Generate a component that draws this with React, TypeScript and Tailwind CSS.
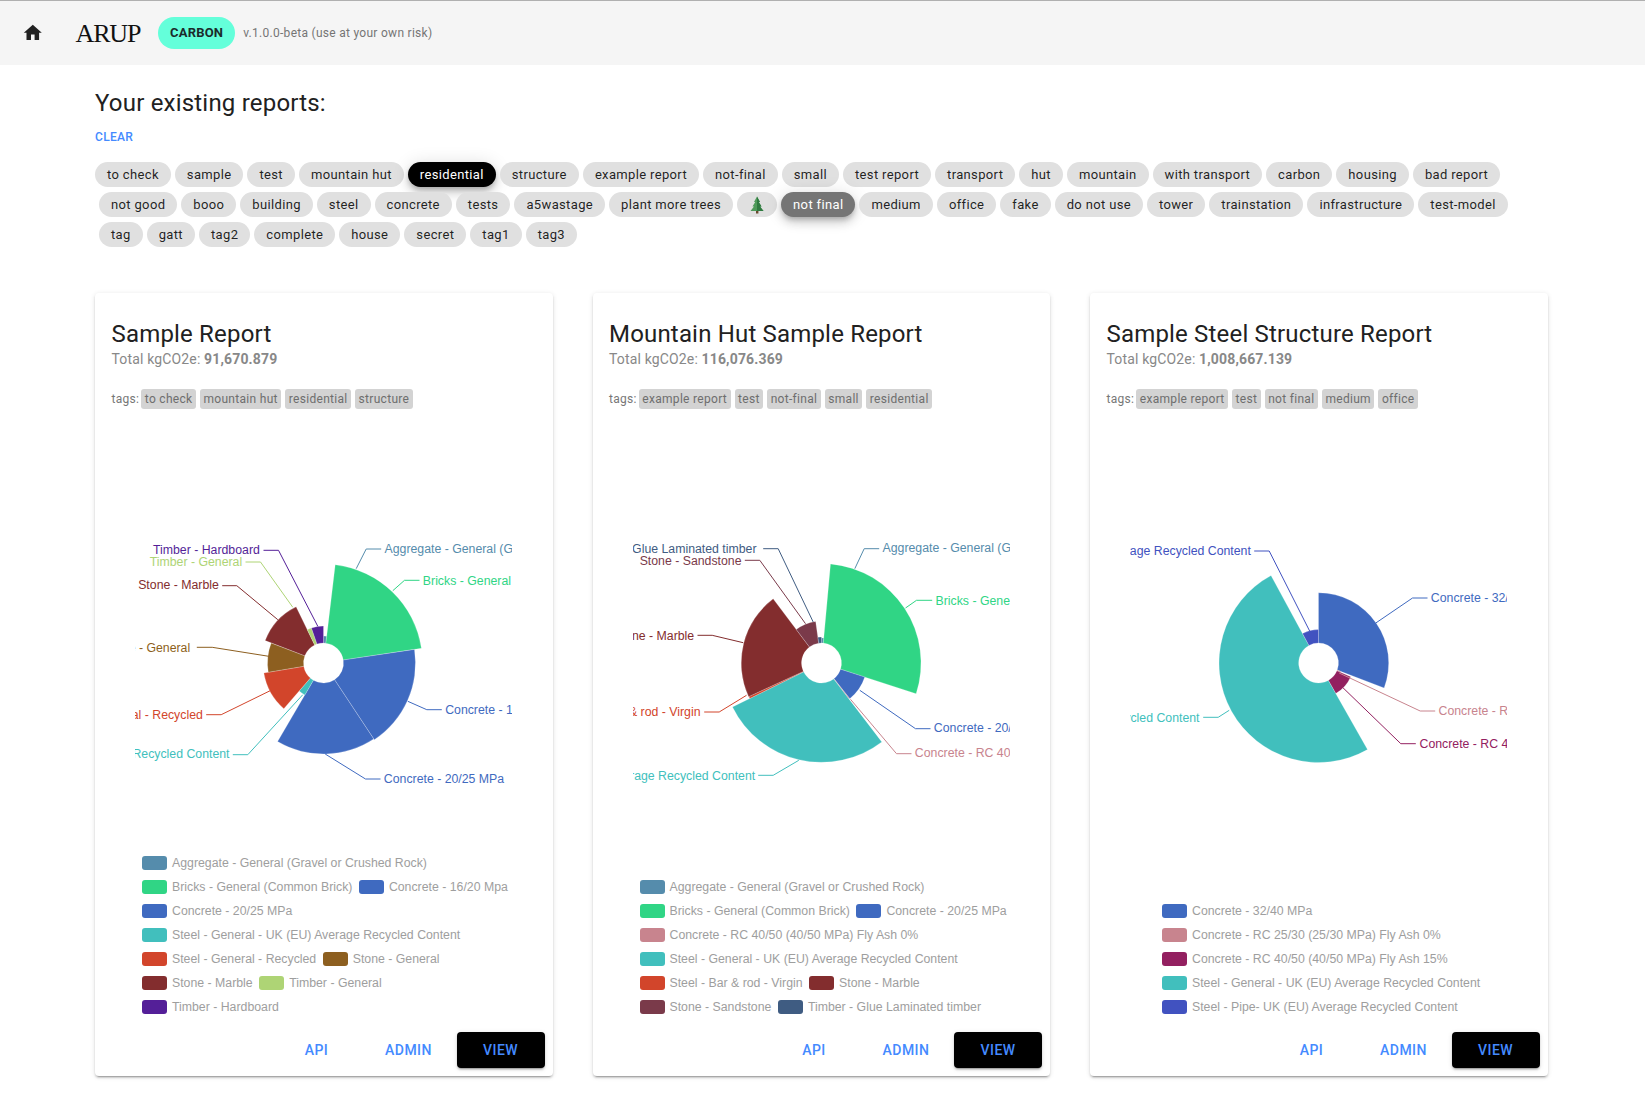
import React from "react";

const C = {
  agg: "#558CAC", bri: "#30D585", con: "#3F6AC0", ste: "#41BFBD", rec: "#D2452B", sto: "#8D5F20",
  mar: "#832D2E", tim: "#AED475", har: "#541F98", pink: "#C8848E", san: "#7A3A4A", glue: "#3F5C82",
  rc15: "#932060", pipe: "#4152C0",
};

type Wedge = [number, number, number, string];
type Label = { c: string; t: string; pts: number[]; x: number; y: number; end?: boolean };
type Report = {
  title: string; total: string; tags: string[]; center: [number, number];
  wedges: Wedge[]; labels: Label[]; legend: [string, string][][]; legendPad: string;
};

const reports: Report[] = [
  {
    title: "Sample Report", total: "91,670.879", tags: ["to check", "mountain hut", "residential", "structure"],
    center: [612, 425],
    wedges: [
      [0, 6.8, 27, C.agg], [6.8, 81.5, 99, C.bri], [81.5, 146.5, 92, C.con], [146.5, 210.3, 91, C.con],
      [210.3, 221, 37, C.ste], [221, 260.5, 60.5, C.rec], [260.5, 291, 56, C.sto], [291, 334, 62.5, C.mar],
      [334, 341, 37, C.tim], [341, 360, 37, C.har],
    ],
    labels: [
      { c: C.agg, t: "Aggregate - General (Gravel or Crushed Rock)", pts: [710, 142, 740, 83, 785, 83], x: 795, y: 83 },
      { c: C.bri, t: "Bricks - General (Common Brick)", pts: [820, 208, 855, 177, 900, 177], x: 910, y: 177 },
      { c: C.con, t: "Concrete - 16/20 Mpa", pts: [865, 540, 922, 565, 967, 565], x: 977, y: 565 },
      { c: C.con, t: "Concrete - 20/25 MPa", pts: [617, 698, 738, 773, 783, 773], x: 793, y: 773 },
      { c: C.ste, t: "Steel - General - UK (EU) Average Recycled Content", pts: [550, 520, 385, 700, 340, 700], x: 330, y: 698, end: true },
      { c: C.rec, t: "Steel - General - Recycled", pts: [452, 508, 305, 580, 260, 580], x: 250, y: 580, end: true },
      { c: C.sto, t: "Stone - General", pts: [448, 405, 278, 378, 232, 378], x: 212, y: 378, end: true },
      { c: C.mar, t: "Stone - Marble", pts: [475, 295, 352, 193, 308, 193], x: 298, y: 191, end: true },
      { c: C.tim, t: "Timber - General", pts: [520, 258, 423, 122, 378, 122], x: 368, y: 122, end: true },
      { c: C.har, t: "Timber - Hardboard", pts: [595, 315, 477, 87, 432, 87], x: 421, y: 86, end: true },
    ],
    legendPad: "pl-[47px]",
    legend: [
      [[C.agg, "Aggregate - General (Gravel or Crushed Rock)"]],
      [[C.bri, "Bricks - General (Common Brick)"], [C.con, "Concrete - 16/20 Mpa"]],
      [[C.con, "Concrete - 20/25 MPa"]],
      [[C.ste, "Steel - General - UK (EU) Average Recycled Content"]],
      [[C.rec, "Steel - General - Recycled"], [C.sto, "Stone - General"]],
      [[C.mar, "Stone - Marble"], [C.tim, "Timber - General"]],
      [[C.har, "Timber - Hardboard"]],
    ],
  },
  {
    title: "Mountain Hut Sample Report", total: "116,076.369", tags: ["example report", "test", "not-final", "small", "residential"],
    center: [665, 428],
    wedges: [
      [0, 5.2, 25, C.agg], [5.2, 108, 99.5, C.bri], [108, 141.6, 45.5, C.con], [141.6, 142.6, 45, C.pink],
      [142.6, 243.7, 99.3, C.ste], [243.7, 245.2, 80, C.rec], [245.2, 323, 80.3, C.mar], [323, 352, 42, C.san],
      [352, 360, 26, C.glue],
    ],
    labels: [
      { c: C.agg, t: "Aggregate - General (Gravel or Crushed Rock)", pts: [765, 145, 793, 85, 838, 85], x: 848, y: 83 },
      { c: C.bri, t: "Bricks - General (Common Brick)", pts: [917, 263, 950, 240, 997, 240], x: 1007, y: 240 },
      { c: C.con, t: "Concrete - 20/25 MPa", pts: [780, 510, 947, 625, 992, 625], x: 1002, y: 623 },
      { c: C.pink, t: "Concrete - RC 40/50 (40/50 MPa) Fly Ash 0%", pts: [752, 537, 890, 700, 935, 700], x: 945, y: 698 },
      { c: C.ste, t: "Steel - General - UK (EU) Average Recycled Content", pts: [597, 720, 520, 765, 475, 765], x: 466, y: 765, end: true },
      { c: C.rec, t: "Steel - Bar & rod - Virgin", pts: [440, 525, 358, 575, 313, 575], x: 302, y: 573, end: true },
      { c: C.mar, t: "Stone - Marble", pts: [430, 367, 337, 345, 293, 345], x: 283, y: 345, end: true },
      { c: C.san, t: "Stone - Sandstone", pts: [617, 310, 480, 120, 435, 120], x: 425, y: 120, end: true },
      { c: C.glue, t: "Timber - Glue Laminated timber", pts: [640, 305, 535, 85, 490, 85], x: 470, y: 84, end: true },
    ],
    legendPad: "pl-[47px]",
    legend: [
      [[C.agg, "Aggregate - General (Gravel or Crushed Rock)"]],
      [[C.bri, "Bricks - General (Common Brick)"], [C.con, "Concrete - 20/25 MPa"]],
      [[C.pink, "Concrete - RC 40/50 (40/50 MPa) Fly Ash 0%"]],
      [[C.ste, "Steel - General - UK (EU) Average Recycled Content"]],
      [[C.rec, "Steel - Bar & rod - Virgin"], [C.mar, "Stone - Marble"]],
      [[C.san, "Stone - Sandstone"], [C.glue, "Timber - Glue Laminated timber"]],
    ],
  },
  {
    title: "Sample Steel Structure Report", total: "1,008,667.139", tags: ["example report", "test", "not final", "medium", "office"],
    center: [658, 430],
    wedges: [
      [0, 110.8, 70.2, C.con], [110.8, 113, 24, C.pink], [113, 150.5, 35, C.rc15],
      [150.5, 331.5, 99.5, C.ste], [331.5, 360, 33.5, C.pipe],
    ],
    labels: [
      { c: C.con, t: "Concrete - 32/40 MPa", pts: [830, 310, 940, 235, 985, 235], x: 995, y: 233 },
      { c: C.pink, t: "Concrete - RC 25/30 (25/30 MPa) Fly Ash 0%", pts: [720, 460, 963, 574, 1008, 574], x: 1018, y: 572 },
      { c: C.rc15, t: "Concrete - RC 40/50 (40/50 MPa) Fly Ash 15%", pts: [730, 503, 905, 672, 950, 672], x: 961, y: 671 },
      { c: C.ste, t: "Steel - General - UK (EU) Average Recycled Content", pts: [390, 572, 357, 593, 312, 593], x: 301, y: 593, end: true },
      { c: C.pipe, t: "Steel - Pipe- UK (EU) Average Recycled Content", pts: [632, 335, 510, 94, 465, 94], x: 455, y: 92, end: true },
    ],
    legendPad: "pl-[72px]",
    legend: [
      [[C.con, "Concrete - 32/40 MPa"]],
      [[C.pink, "Concrete - RC 25/30 (25/30 MPa) Fly Ash 0%"]],
      [[C.rc15, "Concrete - RC 40/50 (40/50 MPa) Fly Ash 15%"]],
      [[C.ste, "Steel - General - UK (EU) Average Recycled Content"]],
      [[C.pipe, "Steel - Pipe- UK (EU) Average Recycled Content"]],
    ],
  },
];

const chipRows: string[][] = [
  ["to check", "sample", "test", "mountain hut", "residential", "structure", "example report", "not-final", "small", "test report", "transport", "hut", "mountain", "with transport", "carbon", "housing", "bad report"],
  ["not good", "booo", "building", "steel", "concrete", "tests", "a5wastage", "plant more trees", "tree", "not final", "medium", "office", "fake", "do not use", "tower", "trainstation", "infrastructure", "test-model"],
  ["tag", "gatt", "tag2", "complete", "house", "secret", "tag1", "tag3"],
];

const W = 377, H = 410, CX = 188.5, CY = 232;

function wedgePath(a0: number, a1: number, r: number, cx: number) {
  const ri = 20;
  const p = (a: number, rr: number) => {
    const t = (a * Math.PI) / 180;
    return `${(cx + rr * Math.sin(t)).toFixed(2)} ${(CY - rr * Math.cos(t)).toFixed(2)}`;
  };
  const large = a1 - a0 > 180 ? 1 : 0;
  return `M${p(a0, ri)} L${p(a0, r)} A${r} ${r} 0 ${large} 1 ${p(a1, r)} L${p(a1, ri)} A${ri} ${ri} 0 ${large} 0 ${p(a0, ri)} Z`;
}

function Chart({ r }: { r: Report }) {
  const [zx, zy] = r.center;
  const mx = (v: number) => CX + (v - zx) / 3;
  const my = (v: number) => CY + (v - zy) / 3;
  return (
    <svg width={W} height={H} viewBox={`0 0 ${W} ${H}`} className="block mx-auto overflow-hidden">
      {r.wedges.map(([a, b, rad, c], i) => (
        <path key={i} d={wedgePath(a, b, rad, CX)} fill={c} stroke="#ffffff" strokeOpacity={0.35} strokeWidth={0.6} />
      ))}
      {r.labels.map((l, i) => {
        const pts: string[] = [];
        for (let k = 0; k < l.pts.length; k += 2) pts.push(`${mx(l.pts[k]).toFixed(1)},${my(l.pts[k + 1]).toFixed(1)}`);
        return (
          <g key={i}>
            <polyline points={pts.join(" ")} fill="none" stroke={l.c} strokeWidth={1} />
            <text x={mx(l.x)} y={my(l.y) + 4.3} fill={l.c} fontSize={12.3} textAnchor={l.end ? "end" : "start"} fontFamily="'Liberation Sans', Arial, sans-serif">
              {l.t}
            </text>
          </g>
        );
      })}
    </svg>
  );
}

function Tree() {
  return (
    <svg width="16" height="18" viewBox="0 0 16 18">
      <rect x="7" y="14" width="2.4" height="3.5" fill="#6b4a2f" />
      <path d="M8 0.5 L11 6 L9.8 6 L12.5 10.5 L11 10.5 L14.5 15 L1.5 15 L5 10.5 L3.5 10.5 L6.2 6 L5 6 Z" fill="#4f9a5a" />
      <path d="M8 0.5 L11 6 L9.8 6 L12.5 10.5 L11 10.5 L14.5 15 L8 15 Z" fill="#2f7a40" />
    </svg>
  );
}

function Chip({ t, first }: { t: string; first: boolean }) {
  const base = "h-[25px] px-[12px] rounded-full flex items-center text-[13px] leading-none tracking-[0.35px] whitespace-nowrap";
  const tone =
    t === "residential"
      ? "bg-black text-white shadow-[0_3px_5px_-1px_rgba(0,0,0,0.2),0_6px_10px_0_rgba(0,0,0,0.14),0_1px_18px_0_rgba(0,0,0,0.12)]"
      : t === "not final"
      ? "bg-[#757575] text-white shadow-[0_3px_5px_-1px_rgba(0,0,0,0.2),0_6px_10px_0_rgba(0,0,0,0.14),0_1px_18px_0_rgba(0,0,0,0.12)]"
      : "bg-[#e0e0e0] text-[rgba(0,0,0,0.87)]";
  return (
    <span className={`${base} ${tone} ${first ? "ml-[-4px]" : ""}`}>
      {t === "tree" ? <Tree /> : t}
    </span>
  );
}

function Card({ r }: { r: Report }) {
  return (
    <div className="w-[457.5px] h-[783px] bg-white rounded-[4px] flex flex-col shadow-[0_3px_1px_-2px_rgba(0,0,0,0.2),0_2px_2px_0_rgba(0,0,0,0.14),0_1px_5px_0_rgba(0,0,0,0.12)]">
      <div className="pl-[16.5px] pt-[27px]">
        <div className="text-[24px] leading-[28px] tracking-[0.18px] text-[#212121]">{r.title}</div>
        <div className="text-[14px] leading-[20px] mt-[1px] tracking-[0.15px] text-[#888888]">
          Total kgCO2e: <b className="font-bold">{r.total}</b>
        </div>
        <div className="flex items-center gap-[4px] mt-[20px] text-[12px] leading-[20px] tracking-[0.3px] text-[#777777]">
          <span className="mr-[-2px]">tags:</span>
          {r.tags.map((t) => (
            <span key={t} className="bg-[#d3d3d3] rounded-[3px] px-[3.5px] h-[20px] text-[#6e6e6e]">{t}</span>
          ))}
        </div>
      </div>
      <div className="mt-[22px]">
        <Chart r={r} />
      </div>
      <div className={`mt-auto flex flex-col gap-[4px] ${r.legendPad} font-['Liberation_Sans',Arial,sans-serif] text-[12.3px] leading-[20px] text-[#9e9e9e]`}>
        {r.legend.map((row, i) => (
          <div key={i} className="flex items-center gap-[6.5px]">
            {row.map(([c, t]) => (
              <div key={t} className="flex items-center gap-[5px] whitespace-nowrap">
                <span className="w-[25px] h-[14px] rounded-[3px]" style={{ backgroundColor: c }} />
                <span>{t}</span>
              </div>
            ))}
          </div>
        ))}
      </div>
      <div className="flex justify-end gap-[4px] mt-[15px] pr-[8px] pb-[8px] text-[14px] font-medium tracking-[0.5px] text-[#448aff]">
        <button className="w-[88px] h-[36px] rounded-[4px] pt-[1px]">API</button>
        <button className="w-[88px] h-[36px] rounded-[4px] pt-[1px]">ADMIN</button>
        <button className="w-[88px] h-[36px] rounded-[4px] pt-[1px] bg-black shadow-[0_3px_1px_-2px_rgba(0,0,0,0.2),0_2px_2px_0_rgba(0,0,0,0.14),0_1px_5px_0_rgba(0,0,0,0.12)]">VIEW</button>
      </div>
    </div>
  );
}

export default function App() {
  return (
    <div className="min-h-[1119px] bg-white font-['Roboto',sans-serif]">
      <header className="h-[65px] bg-[#f5f5f5] border-t border-[#b0b0b0] flex items-center">
        <svg width="21.6" height="21.6" viewBox="0 0 24 24" className="ml-[22px] fill-[#212121]">
          <path d="M10 20v-6h4v6h5v-8h3L12 3 2 12h3v8z" />
        </svg>
        <span className="ml-[32px] font-['Liberation_Serif',serif] text-[26px] tracking-[-1.2px] text-[#111111]">ARUP</span>
        <span className="ml-[18px] h-[32px] w-[77px] rounded-full bg-[#64ffda] flex items-center justify-center text-[13px] font-bold tracking-[0.2px] text-[#1b2b2b]">CARBON</span>
        <span className="ml-[8px] text-[12px] tracking-[0.28px] text-[#757575]">v.1.0.0-beta (use at your own risk)</span>
      </header>
      <main className="pl-[95px] pr-[97.5px]">
        <h1 className="pt-[22px] text-[24px] leading-[32px] tracking-[0.2px] text-[#212121]">Your existing reports:</h1>
        <div className="mt-[10px] text-[12px] leading-[16px] font-medium tracking-[0.3px] text-[#448aff]">CLEAR</div>
        <div className="mt-[17px] pl-[4px] flex flex-col gap-[5px]">
          {chipRows.map((row, i) => (
            <div key={i} className="flex gap-[4px]">
              {row.map((t, j) => (
                <Chip key={t} t={t} first={i === 0 && j === 0} />
              ))}
            </div>
          ))}
        </div>
        <div className="mt-[46px] flex justify-between">
          {reports.map((r) => (
            <Card key={r.title} r={r} />
          ))}
        </div>
      </main>
    </div>
  );
}
